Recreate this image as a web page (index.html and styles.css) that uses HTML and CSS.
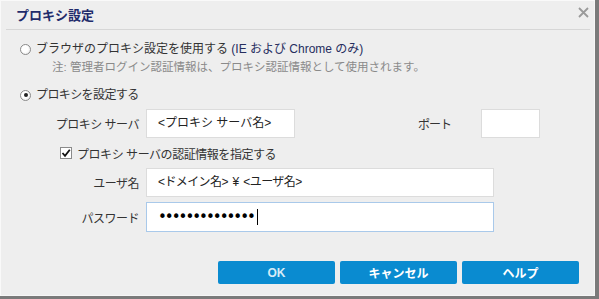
FILE: index.html
```html
<!DOCTYPE html>
<html lang="ja">
<head>
<meta charset="utf-8">
<title>プロキシ設定</title>
<link rel="stylesheet" href="styles.css">
</head>
<body>
<div class="dialog">
  <div class="header">
    <div class="title">プロキシ設定</div>
    <svg class="close" width="11" height="11" viewBox="0 0 11 11"><path d="M1 1 L10 10 M10 1 L1 10" stroke="#9a9a9a" stroke-width="1.8" fill="none"/></svg>
  </div>

  <div class="radio-row first">
    <span class="radio"></span>
    <span class="radio-text">ブラウザのプロキシ設定を使用する <span class="hint">(IE および Chrome のみ)</span></span>
  </div>
  <div class="note">注: 管理者ログイン認証情報は、プロキシ認証情報として使用されます。</div>

  <div class="radio-row second">
    <span class="radio checked"><span class="dot"></span></span>
    <span class="radio-text narrow">プロキシを設定する</span>
  </div>

  <div class="field-row server-row">
    <div class="label">プロキシ サーバ</div>
    <div class="input server">&lt;プロキシ サーバ名&gt;</div>
    <div class="port-label">ポート</div>
    <div class="input port"></div>
  </div>

  <div class="check-row">
    <span class="checkbox"><svg width="10" height="10" viewBox="0 0 10 10"><path d="M1.5 5 L4 7.8 L8.8 1.8" stroke="#111" stroke-width="1.8" fill="none"/></svg></span>
    <span class="check-text">プロキシ サーバの認証情報を指定する</span>
  </div>

  <div class="field-row user-row">
    <div class="label">ユーザ名</div>
    <div class="input wide user">&lt;ドメイン名&gt; ¥ &lt;ユーザ名&gt;</div>
  </div>

  <div class="field-row pass-row">
    <div class="label">パスワード</div>
    <div class="input wide focused"><span class="dots">••••••••••••••</span><span class="caret"></span></div>
  </div>

  <div class="buttons">
    <button class="btn ok">OK</button>
    <button class="btn">キャンセル</button>
    <button class="btn">ヘルプ</button>
  </div>
</div>
</body>
</html>
```

FILE: styles.css
```css
html {
  background: #7a7a7a;
}
body {
  margin: 0;
  font-family: "Liberation Sans", "Noto Sans CJK JP", sans-serif;
  font-size: 12px;
  color: #333;
}
.dialog {
  width: 595px;
  height: 296px;
  border-right: 4px solid #7a7a7a;
  border-bottom: 3px solid #7a7a7a;
  background: #eeeeee;
  box-shadow: inset 1px 1px 0 #f9f9f9, inset -1px -1px 0 #f6f6f6;
  overflow: hidden;
}
.header {
  height: 29px;
  margin: 0 5px 0 6px;
  border-bottom: 1px solid #d6d6d6;
  display: flex;
  align-items: flex-start;
  justify-content: space-between;
}
.title {
  padding: 7px 0 0 10px;
  line-height: 18px;
  font-size: 13px;
  font-weight: bold;
  color: #1f2b6b;
}
.close {
  margin: 7px 1px 0 0;
}
.radio-row {
  display: flex;
  align-items: center;
  height: 20px;
  padding-left: 20px;
}
.radio-row.first {
  margin-top: 9px;
}
.radio-row.second {
  margin-top: 9px;
}
.radio {
  width: 9px;
  height: 9px;
  border-radius: 50%;
  border: 1px solid #8a8a8a;
  background: radial-gradient(circle at 40% 40%, #ffffff 40%, #e4e4e4 100%);
  display: flex;
  align-items: center;
  justify-content: center;
  margin-right: 5px;
  flex: none;
}
.radio .dot {
  width: 4px;
  height: 4px;
  border-radius: 50%;
  background: #222;
}
.radio-text {
  line-height: 20px;
  color: #333;
}
.radio-text.narrow {
  letter-spacing: -0.6px;
}
.hint {
  color: #262d5e;
}
.note {
  padding-left: 52px;
  height: 17px;
  line-height: 17px;
  font-size: 11.5px;
  color: #8a8a8a;
}
.field-row {
  display: flex;
  align-items: center;
}
.server-row {
  margin-top: 4px;
}
.label {
  width: 99px;
  margin-left: 40px;
  margin-right: 7px;
  text-align: right;
  color: #333;
  white-space: nowrap;
  letter-spacing: -0.5px;
}
.input {
  box-sizing: border-box;
  height: 29px;
  background: #ffffff;
  border: 1px solid #dcdcdc;
  padding-left: 11px;
  line-height: 27px;
  color: #222;
  white-space: pre;
  display: flex;
  align-items: center;
}
.input.server {
  width: 149px;
}
.port-label {
  margin-left: 123px;
  width: 63px;
  letter-spacing: -1px;
}
.input.port {
  width: 59px;
}
.check-row {
  display: flex;
  align-items: center;
  height: 20px;
  margin-top: 5px;
  padding-left: 60px;
}
.check-text {
  letter-spacing: -0.45px;
}
.checkbox {
  box-sizing: border-box;
  width: 12px;
  height: 12px;
  border: 1px solid #8a8a8a;
  background: #fff;
  display: flex;
  align-items: center;
  justify-content: center;
  margin-right: 5px;
}
.user-row {
  margin-top: 5px;
}
.pass-row {
  margin-top: 5px;
}
.input.wide {
  width: 348px;
}
.input.user {
  letter-spacing: -0.6px;
  word-spacing: 2px;
}
.input.focused {
  height: 30px;
  border-color: #a9c9ea;
}
.dots {
  font-family: "DejaVu Sans", sans-serif;
  font-size: 15px;
  color: #000;
  letter-spacing: -2px;
}
.caret {
  width: 1px;
  height: 16px;
  background: #000;
  margin-left: 3px;
}
.buttons {
  display: flex;
  justify-content: flex-end;
  gap: 5px;
  margin-top: 29px;
  padding-right: 16px;
}
.btn {
  width: 117px;
  height: 23px;
  border: none;
  border-radius: 2px;
  background: #0a8bd0;
  color: #ffffff;
  font-family: "Liberation Sans", "Noto Sans CJK JP", sans-serif;
  font-size: 12px;
  font-weight: bold;
  padding: 0;
}
.btn.ok {
  color: #d6ebf7;
}
```
